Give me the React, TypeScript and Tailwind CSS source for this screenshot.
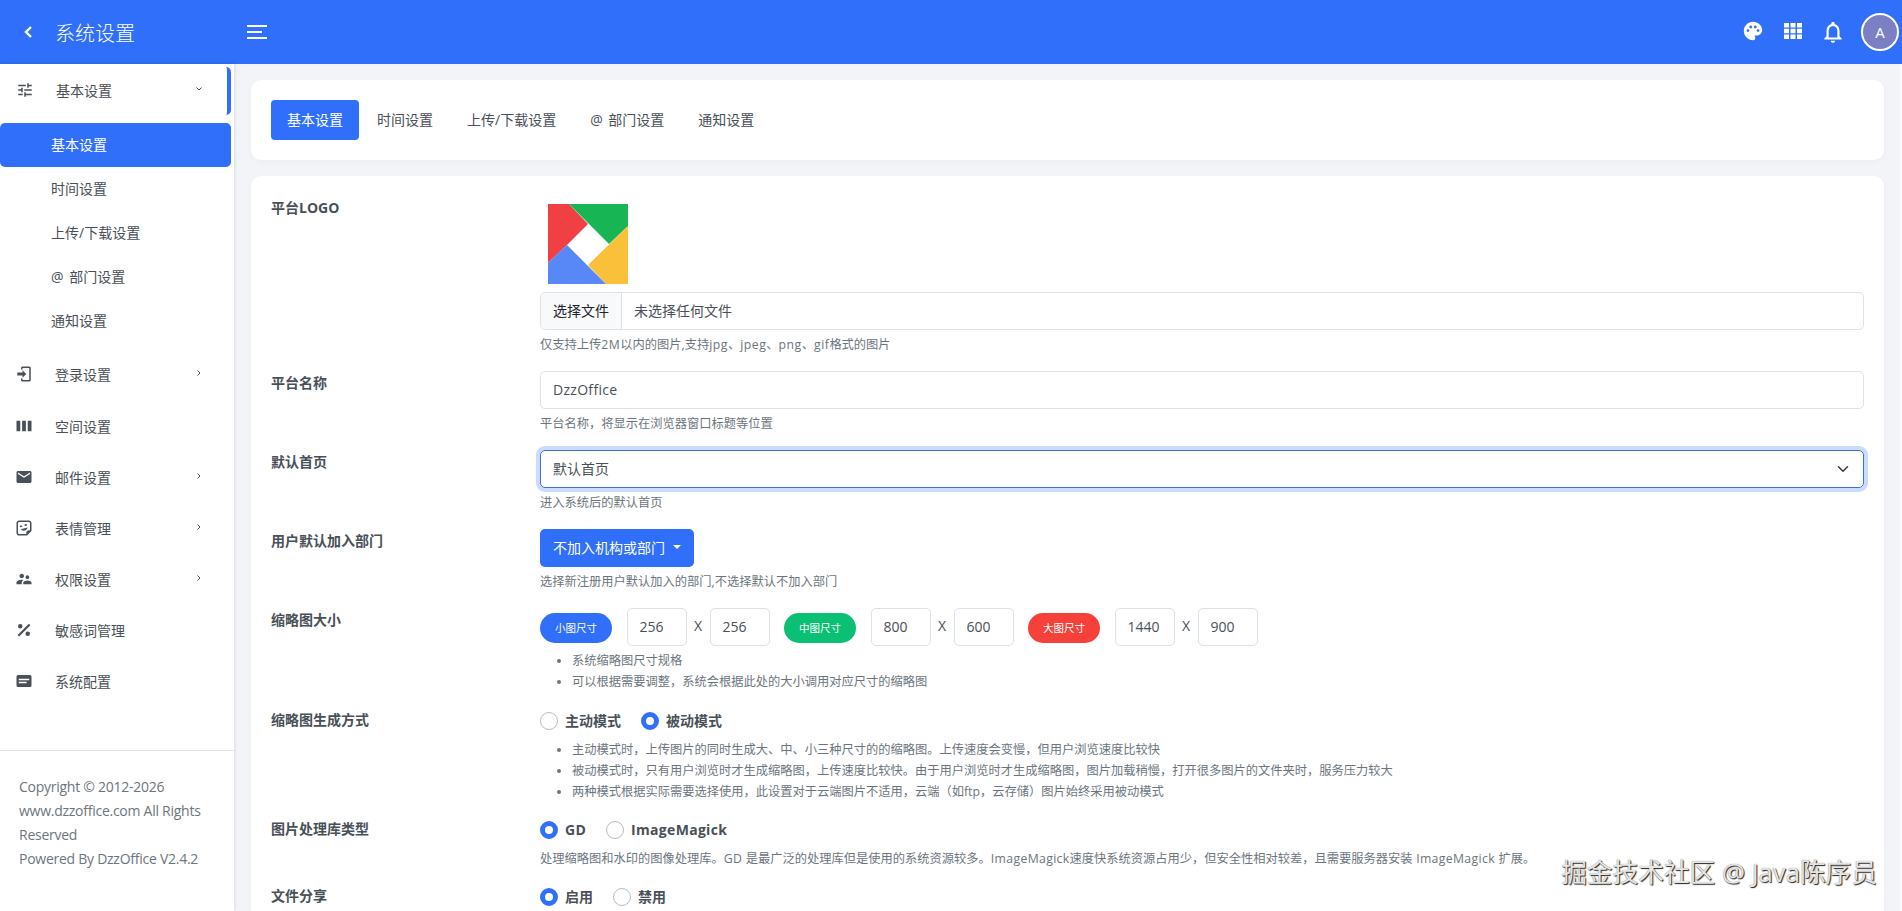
import { useState } from 'react';
import type { ReactNode } from 'react';
import { MdMail, MdNotificationsNone, MdPalette, MdSupervisorAccount, MdTune } from 'react-icons/md';

interface MenuItem {
  label: string;
  icon: ReactNode;
  hasChildren: boolean;
}

function MdiIcon({ path }: { path: string }) {
  return (
    <svg viewBox="0 0 24 24" className="size-[18px]" fill="currentColor">
      <path d={path} />
    </svg>
  );
}

const tabs = ['基本设置', '时间设置', '上传/下载设置', '@ 部门设置', '通知设置'];

const menuItems: MenuItem[] = [
  {
    label: '登录设置',
    icon: <MdiIcon path="M10,17V14H3V10H10V7L15,12L10,17M10,2H19A2,2 0 0,1 21,4V20A2,2 0 0,1 19,22H10A2,2 0 0,1 8,20V18H10V20H19V4H10V6H8V4A2,2 0 0,1 10,2Z" />,
    hasChildren: true,
  },
  { label: '空间设置', icon: <MdiIcon path="M2 5H7V19H2ZM9.5 5H14.5V19H9.5ZM17 5H22V19H17Z" />, hasChildren: false },
  { label: '邮件设置', icon: <MdMail className="size-[18px]" />, hasChildren: true },
  {
    label: '表情管理',
    icon: <MdiIcon path="M5.5,2C3.56,2 2,3.56 2,5.5V18.5C2,20.44 3.56,22 5.5,22H16L22,16V5.5C22,3.56 20.44,2 18.5,2H5.5M5.75,4H18.25A1.75,1.75 0 0,1 20,5.75V15H18.5C16.56,15 15,16.56 15,18.5V20H5.75A1.75,1.75 0 0,1 4,18.25V5.75A1.75,1.75 0 0,1 5.75,4M14.44,6.77C14.28,6.77 14.12,6.79 13.97,6.83C13.03,7.09 12.5,8.05 12.74,9C12.79,9.15 12.86,9.3 12.95,9.44L16.18,8.56C16.18,8.39 16.16,8.22 16.12,8.05C15.91,7.3 15.22,6.77 14.44,6.77M8.17,8.5C8,8.5 7.85,8.5 7.7,8.55C6.77,8.81 6.22,9.77 6.47,10.7C6.5,10.86 6.59,11 6.68,11.16L9.91,10.28C9.91,10.11 9.89,9.94 9.85,9.78C9.64,9 8.95,8.5 8.17,8.5M16.72,11.26L7.59,13.77C8.91,15.3 11,15.94 12.95,15.41C14.9,14.87 16.36,13.25 16.72,11.26Z" />,
    hasChildren: true,
  },
  { label: '权限设置', icon: <MdSupervisorAccount className="size-[18px]" />, hasChildren: true },
  {
    label: '敏感词管理',
    icon: <MdiIcon path="M18.5,3.5L3.5,18.5L5.5,20.5L20.5,5.5M7,4A3,3 0 0,0 4,7A3,3 0 0,0 7,10A3,3 0 0,0 10,7A3,3 0 0,0 7,4M17,14A3,3 0 0,0 14,17A3,3 0 0,0 17,20A3,3 0 0,0 20,17A3,3 0 0,0 17,14Z" />,
    hasChildren: false,
  },
  {
    label: '系统配置',
    icon: <MdiIcon path="M20,4H4A2,2 0 0,0 2,6V18A2,2 0 0,0 4,20H20A2,2 0 0,0 22,18V6A2,2 0 0,0 20,4M5,9H19V11H5V9M5,13H15.5V15H5V13Z" />,
    hasChildren: false,
  },
];

const sizes = [
  { label: '小图尺寸', color: 'bg-[#306ffa]', width: '256', height: '256' },
  { label: '中图尺寸', color: 'bg-[#0ac074]', width: '800', height: '600' },
  { label: '大图尺寸', color: 'bg-[#f6413b]', width: '1440', height: '900' },
];

function Header() {
  return (
    <header className="flex h-16 shrink-0 items-center bg-[#306ffa] text-white">
      <svg viewBox="0 0 8 12" className="ml-6 h-3 w-2" fill="none" stroke="currentColor" strokeWidth="2.4">
        <path d="M7 1L2 6L7 11" />
      </svg>
      <h1 className="mt-[3px] ml-[23px] w-[192px] text-xl font-light">系统设置</h1>
      <svg viewBox="0 0 20 14" className="h-3.5 w-5" fill="currentColor">
        <path d="M0 0H20V2H0ZM0 6H15V8H0ZM0 12H20V14H0Z" />
      </svg>
      <div className="mr-0.5 ml-auto flex items-center">
        <MdPalette className="mr-5 mb-0.5 size-[22px]" />
        <svg viewBox="0 0 18 16" className="mr-[18px] mb-0.5 h-4 w-[18px]" fill="currentColor">
          <path d="M0 0H5V4.4H0ZM6.5 0H11.5V4.4H6.5ZM13 0H18V4.4H13ZM0 5.8H5V10.2H0ZM6.5 5.8H11.5V10.2H6.5ZM13 5.8H18V10.2H13ZM0 11.6H5V16H0ZM6.5 11.6H11.5V16H6.5ZM13 11.6H18V16H13Z" />
        </svg>
        <MdNotificationsNone className="mr-[15px] size-[26px]" />
        <div className="mr-px flex size-[38px] items-center justify-center rounded-full border-2 border-white bg-[#7b7fc4] pt-0.5 text-[15px] font-medium">
          A
        </div>
      </div>
    </header>
  );
}

function Sidebar() {
  return (
    <aside className="z-10 flex w-[234px] shrink-0 flex-col bg-white shadow-[0_0_4px_rgba(0,0,0,0.15)]">
      <div className="mt-[3px] flex h-12 w-[231px] items-center rounded-[5px] border-r-4 border-[#306ffa] pr-[25px] pl-4">
        <MdTune className="mb-0.5 size-[18px]" />
        <span className="ml-[22px] flex-1">基本设置</span>
        <svg viewBox="0 0 6 4" className="mb-1 h-1 w-1.5" fill="none" stroke="currentColor">
          <path d="M0.5 0.5L3 3L5.5 0.5" />
        </svg>
      </div>
      <ul className="mt-2 mb-2 w-[231px]">
        {tabs.map((tab, i) => (
          <li
            key={tab}
            className={`flex h-11 items-center rounded-[5px] pl-[51px] [word-spacing:2px] ${i === 0 ? 'bg-[#306ffa] text-white' : ''}`}
          >
            {tab}
          </li>
        ))}
      </ul>
      <nav className="flex w-[231px] flex-col gap-[3px]">
        {menuItems.map(item => (
          <a key={item.label} className="flex h-12 items-center pr-[30px] pl-[15px] first:mb-px">
            <span className="mb-0.5">{item.icon}</span>
            <span className="ml-[22px] flex-1">{item.label}</span>
            {item.hasChildren && (
              <svg viewBox="0 0 4 6" className="mb-1 h-1.5 w-1" fill="none" stroke="currentColor">
                <path d="M0.5 0.5L3 3L0.5 5.5" />
              </svg>
            )}
          </a>
        ))}
      </nav>
      <footer className="mt-auto h-[161px] border-t border-[#dfe3e7] py-6 pr-5 pl-[19px] text-sm leading-6 tracking-[-0.26px] text-[#6c757d]">
        Copyright © 2012-2026
        <br />
        www.dzzoffice.com All Rights Reserved
        <br />
        Powered By DzzOffice V2.4.2
      </footer>
    </aside>
  );
}

function Row({ label, className = '', children }: { label: string; className?: string; children: ReactNode }) {
  return (
    <div className={`mb-4 flex ${className}`}>
      <div className="w-[269px] shrink-0 pt-px leading-[21px] font-bold">{label}</div>
      <div className="min-w-0 flex-1">{children}</div>
    </div>
  );
}

function Help({ children }: { children: ReactNode }) {
  return <p className="mt-1 text-[12.25px] leading-[21px] whitespace-nowrap text-[#6c757d]">{children}</p>;
}

function HelpList({ items }: { items: string[] }) {
  return (
    <ul className="mt-1 list-disc pl-8 text-[12.25px] leading-[21px] text-[#6c757d]">
      {items.map(item => (
        <li key={item}>{item}</li>
      ))}
    </ul>
  );
}

function RadioGroup({ options, initial }: { options: string[]; initial: string }) {
  const [value, setValue] = useState(initial);
  return (
    <div className="flex h-[27px] items-start gap-5 pt-1 font-bold">
      {options.map(option => (
        <label key={option} className="flex items-center" onClick={() => setValue(option)}>
          <span
            className={`mr-[7px] size-[18px] rounded-full ${
              value === option ? 'border-[5px] border-[#306ffa]' : 'border border-[#b9bcc0]'
            }`}
          />
          <span className={`leading-[18px] ${/[a-z]/i.test(option) ? 'tracking-[0.3px]' : ''}`}>{option}</span>
        </label>
      ))}
    </div>
  );
}

function Logo() {
  return (
    <svg viewBox="0 0 80 80" className="mt-2 mb-2 ml-2 size-20">
      <path d="M0 0H21L40 20L19 41L0 59Z" fill="#f04043" />
      <path d="M21 0H80V22L61 40Z" fill="#18b554" />
      <path d="M80 22V80H58L40 61Z" fill="#fbc03a" />
      <path d="M0 59L19 41L58 80H0Z" fill="#5887f8" />
    </svg>
  );
}

function App() {
  return (
    <div className="relative flex h-[911px] flex-col overflow-hidden bg-[#f3f4f8] font-['Open_Sans','Noto_Sans_CJK_SC',sans-serif] text-sm text-[#495057]">
      <Header />
      <div className="flex min-h-0 flex-1">
        <Sidebar />
        <main className="flex min-w-0 flex-1 flex-col gap-4 border-r-2 border-[#fafbfd] pt-4 pr-4 pl-[17px]">
          <div className="flex h-20 shrink-0 items-center rounded-[10px] bg-white px-5 shadow-[0_2px_6px_rgba(0,0,0,0.03)]">
            {tabs.map((tab, i) => (
              <button
                key={tab}
                className={`mr-0.5 flex h-10 items-center rounded px-4 [word-spacing:2px] ${i === 0 ? 'bg-[#306ffa] text-white' : ''}`}
              >
                {tab}
              </button>
            ))}
          </div>
          <div className="min-h-0 flex-1 rounded-t-[10px] bg-white p-5 shadow-[0_2px_6px_rgba(0,0,0,0.03)]">
            <Row label="平台LOGO">
              <Logo />
              <div className="flex h-[38px] items-center overflow-hidden rounded-[5px] border border-[#dee2e6]">
                <span className="flex h-full items-center border-r border-[#dee2e6] bg-[#f8f9fa] px-3 text-[#212529]">
                  选择文件
                </span>
                <span className="px-3">未选择任何文件</span>
              </div>
              <Help>
                仅支持上传<span className="tracking-[0.5px]">2M</span>以内的图片,支持
                <span className="tracking-[0.5px]">jpg</span>、<span className="tracking-[0.5px]">jpeg</span>、
                <span className="tracking-[0.5px]">png</span>、<span className="tracking-[0.5px]">gif</span>格式的图片
              </Help>
            </Row>
            <Row label="平台名称">
              <input className="block h-[38px] w-full rounded-[5px] border border-[#dee2e6] px-3 pb-0.5 tracking-[0.3px]" defaultValue="DzzOffice" />
              <Help>平台名称，将显示在浏览器窗口标题等位置</Help>
            </Row>
            <Row label="默认首页">
              <div className="flex h-[38px] items-center justify-between rounded-[5px] border border-[#3d6fd6] px-3 shadow-[0_0_0_4px_#cbdbfe]">
                <span>默认首页</span>
                <svg viewBox="0 0 16 16" className="mr-0.5 size-3" fill="none" stroke="#343a40" strokeWidth="2" strokeLinecap="round" strokeLinejoin="round">
                  <path d="M2 5L8 11L14 5" />
                </svg>
              </div>
              <Help>进入系统后的默认首页</Help>
            </Row>
            <Row label="用户默认加入部门">
              <button className="flex h-[38px] items-center rounded-[5px] bg-[#306ffa] px-[13px] text-white">
                不加入机构或部门
                <span className="mb-0.5 ml-2 border-x-4 border-t-4 border-x-transparent border-t-white" />
              </button>
              <Help>选择新注册用户默认加入的部门,不选择默认不加入部门</Help>
            </Row>
            <Row label="缩略图大小">
              <div className="flex h-[38px] items-center">
                {sizes.map(size => (
                  <div key={size.label} className="mr-[14.5px] flex items-center">
                    <span className={`mt-0.5 mr-[14.5px] flex h-[30px] w-[72px] items-center justify-center rounded-full text-[10.5px] text-white ${size.color}`}>
                      {size.label}
                    </span>
                    <input className="h-[38px] w-[60px] rounded-[5px] border border-[#dee2e6] px-3 pb-0.5" defaultValue={size.width} />
                    <span className="w-[23px] pb-0.5 text-center">X</span>
                    <input className="h-[38px] w-[60px] rounded-[5px] border border-[#dee2e6] px-3 pb-0.5" defaultValue={size.height} />
                  </div>
                ))}
              </div>
              <HelpList items={['系统缩略图尺寸规格', '可以根据需要调整，系统会根据此处的大小调用对应尺寸的缩略图']} />
            </Row>
            <Row label="缩略图生成方式">
              <RadioGroup options={['主动模式', '被动模式']} initial="被动模式" />
              <HelpList
                items={[
                  '主动模式时，上传图片的同时生成大、中、小三种尺寸的的缩略图。上传速度会变慢，但用户浏览速度比较快',
                  '被动模式时，只有用户浏览时才生成缩略图，上传速度比较快。由于用户浏览时才生成缩略图，图片加载稍慢，打开很多图片的文件夹时，服务压力较大',
                  '两种模式根据实际需要选择使用，此设置对于云端图片不适用，云端（如ftp，云存储）图片始终采用被动模式',
                ]}
              />
            </Row>
            <Row label="图片处理库类型" className="-mt-[17px] pt-4">
              <RadioGroup options={['GD', 'ImageMagick']} initial="GD" />
              <Help>
                处理缩略图和水印的图像处理库。<span className="tracking-[0.35px]">GD </span>
                是最广泛的处理库但是使用的系统资源较多。<span className="tracking-[0.35px]">ImageMagick</span>
                速度快系统资源占用少，但安全性相对较差，且需要服务器安装
                <span className="tracking-[0.35px]"> ImageMagick </span>扩展。
              </Help>
            </Row>
            <Row label="文件分享" className="-mt-[17px] pt-4">
              <RadioGroup options={['启用', '禁用']} initial="启用" />
            </Row>
          </div>
        </main>
      </div>
      <div className="absolute right-[25px] bottom-[20px] z-20 text-[25.7px] leading-9 whitespace-nowrap text-[#e6e6e6] [text-shadow:1px_1px_1px_#222,0_0_1px_#777]">
        掘金技术社区 @ Java陈序员
      </div>
    </div>
  );
}

export default App;
